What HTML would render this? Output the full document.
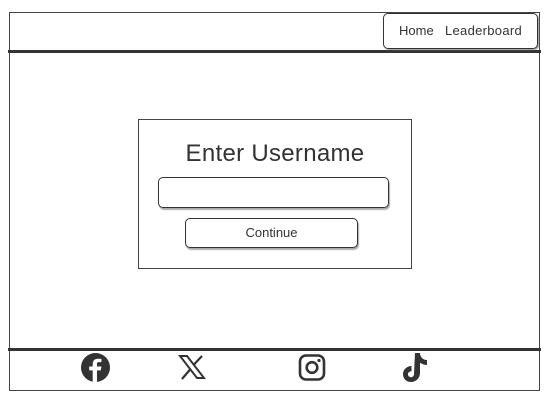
<!DOCTYPE html>
<html><head><style>
body{margin:0;width:547px;height:409px;background:#fff;position:relative;font-family:"Liberation Sans",sans-serif;color:#333;overflow:hidden}
.a{position:absolute;box-sizing:border-box}
</style></head><body>
<div class="a" style="left:9px;top:12px;width:531px;height:379px;border:1.5px solid #444"></div>
<div class="a" style="left:8px;top:50px;width:533px;height:3px;background:#333"></div>
<div class="a" style="left:8px;top:348px;width:533px;height:3px;background:#333"></div>
<div class="a" style="left:383px;top:13px;width:155px;height:36px;border:1.5px solid #333;border-radius:5px;box-shadow:1px 1px 1px #999"></div>
<div class="a" style="left:399px;top:23px;font-size:13px;color:#333">Home</div>
<div class="a" style="left:445px;top:23px;font-size:13px;color:#333;letter-spacing:0.3px">Leaderboard</div>
<div class="a" style="left:138px;top:119px;width:274px;height:150px;border:1.5px solid #444"></div>
<div class="a" style="left:138px;top:140px;width:274px;text-align:center;font-size:24px;color:#333;letter-spacing:0.3px">Enter Username</div>
<div class="a" style="left:158px;top:177px;width:231px;height:31px;border:1.5px solid #333;border-radius:5px;box-shadow:1px 2px 1px #aaa"></div>
<div class="a" style="left:185px;top:218px;width:173px;height:30px;border:1.5px solid #333;border-radius:5px;box-shadow:1px 2px 1px #aaa;text-align:center;line-height:27px;font-size:13px">Continue</div>
<svg class="a" style="left:80px;top:352px" width="31" height="31" viewBox="0 0 32 32"><circle cx="16" cy="16" r="15" fill="#333"/><path d="M17.5 31V19h4l.6-4h-4.6v-2.5c0-1.2.4-2 2-2h2.6V7.2c-.5-.1-2-.2-3.6-.2-3.4 0-5.4 2-5.4 5.6V15h-3.6v4h3.6v12z" fill="#fff"/></svg>
<svg class="a" style="left:178px;top:353px" width="28" height="28" viewBox="0 0 28 28"><path d="M2 3h7l17 22h-7z" fill="none" stroke="#333" stroke-width="2"/><path d="M4 26L12.5 16M15.5 12L24 3" stroke="#333" stroke-width="2.2"/></svg>
<svg class="a" style="left:298px;top:353px" width="28" height="29" viewBox="0 0 28 29"><rect x="2" y="2.5" width="24" height="24" rx="6" fill="none" stroke="#333" stroke-width="2.6"/><circle cx="14" cy="14.5" r="5.3" fill="none" stroke="#333" stroke-width="2.6"/><circle cx="21" cy="7.5" r="1.6" fill="#333"/></svg>
<svg class="a" style="left:401px;top:351px" width="30" height="34" viewBox="0 0 30 34"><path d="M14 2h5c0 4 3 7 7 7v5c-2.6 0-5-.8-7-2.2V22c0 5-4 9-9 9s-8-3.5-8-8 4-8 8.5-8v5.2c-2 0-3.5 1.3-3.5 3s1.4 3 3 3c1.8 0 3-1.3 3-3.2z" fill="#333"/></svg>
</body></html>
